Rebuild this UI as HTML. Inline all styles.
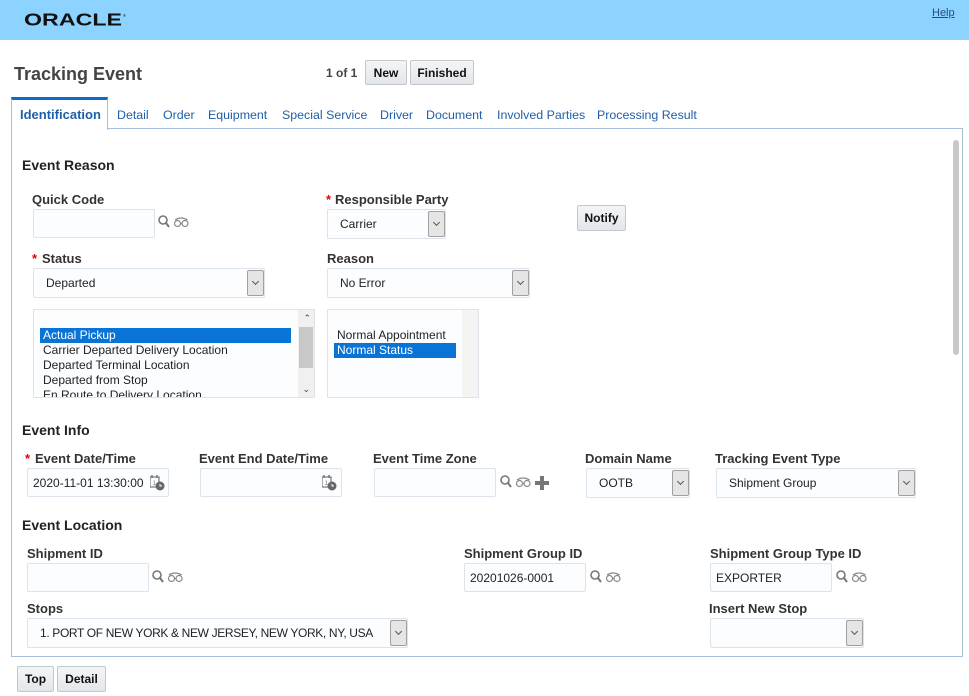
<!DOCTYPE html>
<html><head><meta charset="utf-8"><style>
*{box-sizing:border-box;margin:0;padding:0}
body{width:969px;height:696px;position:relative;background:#fff;font-family:"Liberation Sans",Arial,sans-serif;overflow:hidden;color:#333}
.a{position:absolute;white-space:nowrap}
.hdr{left:0;top:0;width:969px;height:40px;background:#8dd3ff}
.lbl{font-size:13px;font-weight:bold;color:#333;margin-top:1px}
.req{color:#e00;font-size:13px;font-weight:bold;margin-top:1px}
.sec{font-size:14px;font-weight:bold;color:#222}
.inp{background:#fbfdff;border:1px solid #dde3ea;border-radius:2px;font-size:12px;color:#222;padding:0 5px;display:flex;align-items:center}
.sel{background:#fbfdff;border:1px solid #dde3ea;border-radius:2px;font-size:12px;color:#222;padding-left:12px;display:flex;align-items:center}
.arr{position:absolute;right:0;top:1px;bottom:1px;width:17px;background:#e5e5e5;border:1px solid #a0a0a0;border-radius:2px}
.arr:after{content:"";position:absolute;left:5px;top:8px;width:4px;height:4px;border-right:1px solid #555;border-bottom:1px solid #555;transform:rotate(45deg)}
.btn{background:linear-gradient(#f4f5f6,#e3e6e9);border:1px solid #c4c8cc;border-radius:2px;font-size:12px;font-weight:bold;color:#111;display:flex;align-items:center;justify-content:center}
.tab{font-size:12.4px;color:#1f5fa8;top:108px}
.li{font-size:12px;color:#222;height:15px;line-height:15px;padding-left:3px}
.hl{background:#0a74d6;color:#fff}
</style></head><body>
<div class="a hdr"></div>
<svg class="a" style="left:24px;top:12px" width="104" height="15" viewBox="0 0 104 15"><text x="0" y="13.5" font-family="Liberation Sans,Arial" font-weight="bold" font-size="17.5" fill="#111" textLength="98" lengthAdjust="spacingAndGlyphs">ORACLE</text><text x="99" y="5" font-size="4" fill="#111">®</text></svg>
<div class="a" style="left:932px;top:7px;font-size:11px;color:#1f4d8c;text-decoration:underline">Help</div>

<div class="a" style="left:14px;top:64px;font-size:18px;font-weight:bold;color:#444">Tracking Event</div>
<div class="a" style="left:326px;top:66px;font-size:12px;font-weight:bold;color:#444">1 of 1</div>
<div class="a btn" style="left:365px;top:60px;width:42px;height:25px">New</div>
<div class="a btn" style="left:410px;top:60px;width:64px;height:25px">Finished</div>

<div class="a" style="left:11px;top:128px;width:952px;height:529px;border:1px solid #a6bfdb"></div>
<div class="a" style="left:11px;top:97px;width:97px;height:33px;background:#fff;border:1px solid #a6bfdb;border-top:3px solid #0a6bcb;border-bottom:none"></div>
<div class="a tab" style="left:20px;font-weight:bold;font-size:13px;top:107px">Identification</div>
<div class="a tab" style="left:117px">Detail</div>
<div class="a tab" style="left:163px">Order</div>
<div class="a tab" style="left:208px">Equipment</div>
<div class="a tab" style="left:282px">Special Service</div>
<div class="a tab" style="left:380px">Driver</div>
<div class="a tab" style="left:426px">Document</div>
<div class="a tab" style="left:497px">Involved Parties</div>
<div class="a tab" style="left:597px">Processing Result</div>
<div class="a" style="left:953px;top:140px;width:6px;height:215px;background:#c8c8c8;border-radius:3px"></div>

<svg width="0" height="0" style="position:absolute"><defs>
<g id="ic"><circle cx="5" cy="5" r="4" fill="none" stroke="#777" stroke-width="1.6"/><path d="M8 8 L11 12" stroke="#777" stroke-width="2"/>
<g transform="translate(16,2)" fill="none" stroke="#888" stroke-width="1.2"><circle cx="3.5" cy="6.5" r="3"/><circle cx="11" cy="6.5" r="3"/><path d="M6.5 6.5 h1.5 M1 3 Q7 -1 13.5 3"/></g></g>
<g id="cal"><rect x="0" y="2" width="9" height="10" fill="none" stroke="#777" stroke-width="1.2"/><path d="M2 0v3M7 0v3" stroke="#777" stroke-width="1.5"/><text x="2.5" y="10" font-size="6" fill="#777" font-family="Liberation Sans">1</text><circle cx="10" cy="11" r="4.5" fill="#666"/><path d="M10 9v2h2" stroke="#fff" stroke-width="1" fill="none"/></g>
</defs></svg>

<div class="a sec" style="left:22px;top:157px">Event Reason</div>
<div class="a lbl" style="left:32px;top:191px">Quick Code</div>
<div class="a inp" style="left:33px;top:209px;width:122px;height:29px"></div>
<svg class="a" style="left:158px;top:215px" width="36" height="14"><use href="#ic"/></svg>
<div class="a req" style="left:326px;top:191px">*</div><div class="a lbl" style="left:335px;top:191px">Responsible Party</div>
<div class="a sel" style="left:327px;top:209px;width:119px;height:30px">Carrier<div class="arr"></div></div>
<div class="a btn" style="left:577px;top:205px;width:49px;height:26px">Notify</div>

<div class="a req" style="left:32px;top:250px">*</div><div class="a lbl" style="left:42px;top:250px">Status</div>
<div class="a sel" style="left:33px;top:268px;width:232px;height:30px">Departed<div class="arr"></div></div>
<div class="a lbl" style="left:327px;top:250px">Reason</div>
<div class="a sel" style="left:327px;top:268px;width:203px;height:30px">No Error<div class="arr"></div></div>

<div class="a" style="left:33px;top:309px;width:282px;height:89px;border:1px solid #dde3ea;background:#fbfdff;overflow:hidden">
<div style="position:absolute;left:6px;top:18px;width:251px">
<div class="li hl">Actual Pickup</div><div class="li">Carrier Departed Delivery Location</div><div class="li">Departed Terminal Location</div><div class="li">Departed from Stop</div><div class="li">En Route to Delivery Location</div></div>
<div style="position:absolute;right:0;top:0;width:16px;height:87px;background:#f0f0f0"></div>
<div style="position:absolute;right:1px;top:17px;width:14px;height:41px;background:#c8c8c8"></div>
<div style="position:absolute;right:3px;top:3px;font-size:9px;color:#444">&#8963;</div>
<div style="position:absolute;right:4px;bottom:2px;font-size:9px;color:#444">&#8964;</div>
</div>
<div class="a" style="left:327px;top:309px;width:152px;height:89px;border:1px solid #dde3ea;background:#fbfdff;overflow:hidden">
<div style="position:absolute;left:6px;top:18px;width:122px"><div class="li">Normal Appointment</div><div class="li hl">Normal Status</div></div>
<div style="position:absolute;right:0;top:0;width:16px;height:87px;background:#f4f4f4"></div>
</div>

<div class="a sec" style="left:22px;top:422px">Event Info</div>
<div class="a req" style="left:25px;top:450px">*</div><div class="a lbl" style="left:35px;top:450px">Event Date/Time</div>
<div class="a inp" style="left:27px;top:468px;width:142px;height:29px">2020-11-01 13:30:00</div>
<svg class="a" style="left:150px;top:475px" width="16" height="16"><use href="#cal"/></svg>
<div class="a lbl" style="left:199px;top:450px">Event End Date/Time</div>
<div class="a inp" style="left:200px;top:468px;width:142px;height:29px"></div>
<svg class="a" style="left:322px;top:475px" width="16" height="16"><use href="#cal"/></svg>
<div class="a lbl" style="left:373px;top:450px">Event Time Zone</div>
<div class="a inp" style="left:374px;top:468px;width:122px;height:29px"></div>
<svg class="a" style="left:500px;top:475px" width="36" height="14"><use href="#ic"/></svg>
<div class="a" style="left:535px;top:481px;width:14px;height:4px;background:#777"></div>
<div class="a" style="left:540px;top:476px;width:4px;height:14px;background:#777"></div>
<div class="a lbl" style="left:585px;top:450px">Domain Name</div>
<div class="a sel" style="left:586px;top:468px;width:104px;height:30px">OOTB<div class="arr"></div></div>
<div class="a lbl" style="left:715px;top:450px">Tracking Event Type</div>
<div class="a sel" style="left:716px;top:468px;width:200px;height:30px">Shipment Group<div class="arr"></div></div>

<div class="a sec" style="left:22px;top:517px">Event Location</div>
<div class="a lbl" style="left:27px;top:545px">Shipment ID</div>
<div class="a inp" style="left:27px;top:563px;width:122px;height:29px"></div>
<svg class="a" style="left:152px;top:570px" width="36" height="14"><use href="#ic"/></svg>
<div class="a lbl" style="left:464px;top:545px">Shipment Group ID</div>
<div class="a inp" style="left:464px;top:563px;width:122px;height:29px">20201026-0001</div>
<svg class="a" style="left:590px;top:570px" width="36" height="14"><use href="#ic"/></svg>
<div class="a lbl" style="left:710px;top:545px">Shipment Group Type ID</div>
<div class="a inp" style="left:710px;top:563px;width:122px;height:29px">EXPORTER</div>
<svg class="a" style="left:836px;top:570px" width="36" height="14"><use href="#ic"/></svg>
<div class="a lbl" style="left:27px;top:600px">Stops</div>
<div class="a sel" style="left:27px;top:618px;width:381px;height:30px;letter-spacing:-0.35px">1. PORT OF NEW YORK &amp; NEW JERSEY, NEW YORK, NY, USA<div class="arr"></div></div>
<div class="a lbl" style="left:709px;top:600px">Insert New Stop</div>
<div class="a sel" style="left:710px;top:618px;width:154px;height:30px"><div class="arr"></div></div>

<div class="a btn" style="left:17px;top:666px;width:37px;height:26px">Top</div>
<div class="a btn" style="left:57px;top:666px;width:49px;height:26px">Detail</div>
</body></html>
